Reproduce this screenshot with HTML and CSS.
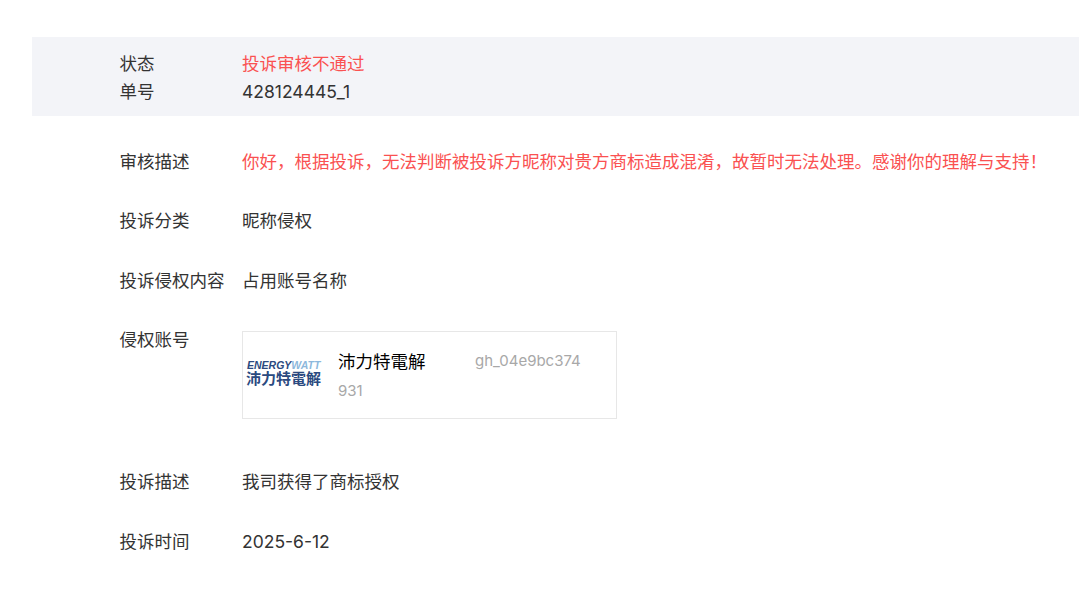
FILE: index.html
```html
<!DOCTYPE html>
<html lang="zh-CN">
<head>
<meta charset="utf-8">
<title>投诉详情</title>
<link rel="stylesheet" href="styles.css">
</head>
<body>
<main class="page">
  <section class="banner">
    <div class="banner-row"><span class="label">状态</span><span class="danger">投诉审核不通过</span></div>
    <div class="banner-row"><span class="label">单号</span><span>428124445_1</span></div>
  </section>
  <section class="details">
    <div class="row"><span class="label">审核描述</span><span class="danger">你好，根据投诉，无法判断被投诉方昵称对贵方商标造成混淆，故暂时无法处理。感谢你的理解与支持！</span></div>
    <div class="row"><span class="label">投诉分类</span><span>昵称侵权</span></div>
    <div class="row"><span class="label">投诉侵权内容</span><span>占用账号名称</span></div>
    <div class="row row-card">
      <span class="label">侵权账号</span>
      <div class="card">
        <div class="logo">
          <div class="logo-en"><span class="logo-dark">ENERGY</span><span class="logo-light">WATT</span></div>
          <div class="logo-cn">沛力特電解</div>
        </div>
        <div class="card-info">
          <div class="card-name">沛力特電解</div>
          <div class="card-count">931</div>
        </div>
        <div class="card-id">gh_04e9bc374</div>
      </div>
    </div>
    <div class="row"><span class="label">投诉描述</span><span>我司获得了商标授权</span></div>
    <div class="row"><span class="label">投诉时间</span><span>2025-6-12</span></div>
  </section>
</main>
</body>
</html>
```

FILE: styles.css
```css
html, body {
  margin: 0;
  padding: 0;
  background: #fff;
}
body {
  font-family: "Inter", "Noto Sans CJK SC", sans-serif;
  font-size: 17.5px;
  line-height: 28px;
  color: #333;
  overflow: hidden;
}
.page {
  padding: 37px 0 0 32px;
}
.banner {
  background: #f3f4f8;
  padding: 13px 0 10px 87.5px;
  height: 79px;
  box-sizing: border-box;
}
.banner-row, .row {
  display: flex;
  white-space: nowrap;
}
.label {
  flex: 0 0 122.5px;
}
.danger {
  color: #fa5151;
}
.details {
  padding: 32px 0 0 87.5px;
  display: flex;
  flex-direction: column;
  gap: 31.33px;
}
.row-card {
  margin-bottom: 18px;
}
.card {
  width: 375px;
  height: 88px;
  box-sizing: border-box;
  border: 1px solid #e7e7e7;
  display: flex;
  margin-top: 5px;
}
.logo {
  flex: 0 0 95px;
  padding: 28px 0 0 3px;
  box-sizing: border-box;
  color: #2b4a80;
}
.logo-en {
  font-family: "Liberation Sans", sans-serif;
  font-size: 10.5px;
  line-height: 11px;
  font-weight: 700;
  font-style: italic;
  letter-spacing: 0;
  padding-left: 1px;
}
.logo-light {
  color: #8db8dc;
}
.logo-cn {
  font-size: 15px;
  line-height: 16px;
  font-weight: 700;
}
.card-info {
  flex: 0 0 137px;
  padding-top: 16px;
}
.card-name {
  color: #000;
  line-height: 28px;
}
.card-count, .card-id {
  color: #a8a8a8;
  font-size: 15px;
}
.card-count {
  line-height: 28px;
  margin-top: 1px;
}
.card-id {
  padding-top: 15px;
  line-height: 28px;
}
```
